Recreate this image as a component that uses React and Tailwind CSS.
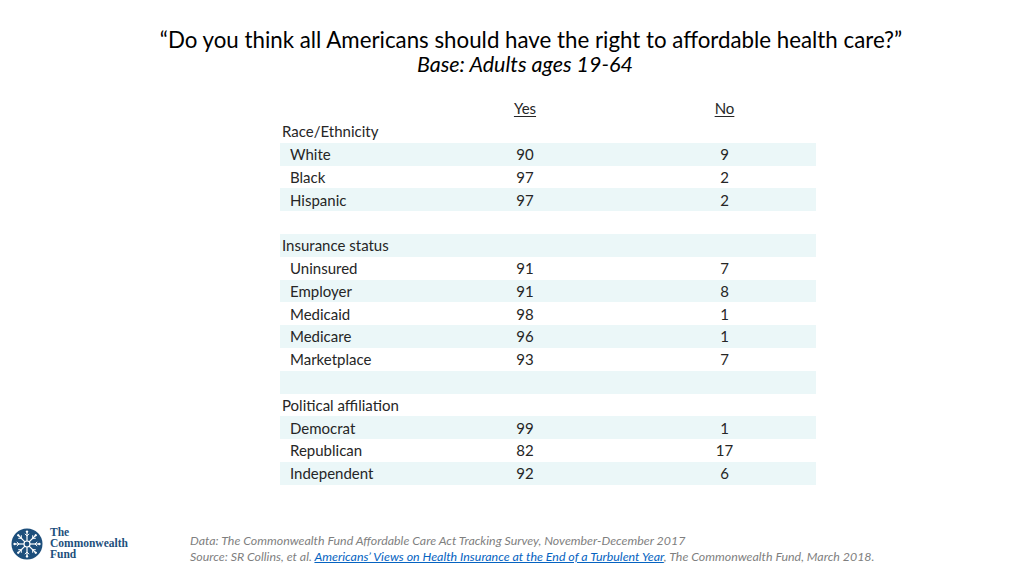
import React from 'react';

const sections = [
  {
    title: 'Race/Ethnicity',
    rows: [
      ['White', '90', '9'],
      ['Black', '97', '2'],
      ['Hispanic', '97', '2'],
    ],
  },
  {
    title: 'Insurance status',
    rows: [
      ['Uninsured', '91', '7'],
      ['Employer', '91', '8'],
      ['Medicaid', '98', '1'],
      ['Medicare', '96', '1'],
      ['Marketplace', '93', '7'],
    ],
  },
  {
    title: 'Political affiliation',
    rows: [
      ['Democrat', '99', '1'],
      ['Republican', '82', '17'],
      ['Independent', '92', '6'],
    ],
  },
];

// flatten into table rows, with a blank spacer between sections
function buildRows() {
  const out = [];
  sections.forEach((s, i) => {
    out.push({ kind: 'section', label: s.title });
    s.rows.forEach((r) => out.push({ kind: 'item', label: r[0], yes: r[1], no: r[2] }));
    if (i < sections.length - 1) out.push({ kind: 'blank' });
  });
  return out;
}

function Logo() {
  const spokes = [0, 45, 90, 135, 180, 225, 270, 315];
  return (
    <svg width="32" height="32" viewBox="0 0 32 32">
      <circle cx="16" cy="16" r="15.5" fill="#1d4f7c" />
      {spokes.map((a) => (
        <g key={a} transform={`rotate(${a} 16 16)`}>
          <line x1="16" y1="13" x2="16" y2="4" stroke="#fff" strokeWidth="1.2" />
          <line x1="16" y1="8" x2="13.8" y2="5.8" stroke="#fff" strokeWidth="0.9" />
          <line x1="16" y1="8" x2="18.2" y2="5.8" stroke="#fff" strokeWidth="0.9" />
          <circle cx="16" cy="3.6" r="1.2" fill="#fff" />
        </g>
      ))}
      <circle cx="16" cy="16" r="3" fill="none" stroke="#fff" strokeWidth="1.2" />
    </svg>
  );
}

export default function App() {
  const rows = buildRows();
  return (
    <div
      className="relative flex h-[576px] w-[1024px] flex-col overflow-hidden bg-white text-[#262626]"
      style={{ fontFamily: 'Lato, "Open Sans", sans-serif' }}
    >
      {/* Title */}
      <div className="pl-[38px] pt-[27px] text-center leading-[25px]">
        <p className="text-[22.3px] text-black">
          “Do you think all Americans should have the right to affordable health care?”
        </p>
        <p className="pr-[12px] text-[21.5px] italic text-black">Base: Adults ages 19-64</p>
      </div>

      {/* Table */}
      <div className="ml-[280px] mt-[20px] w-[536px] text-[15px]">
        <div className="grid h-[23px] grid-cols-[145px_200px_191px] items-center">
          <span />
          <span className="text-center underline underline-offset-2">Yes</span>
          <span className="pl-[8px] text-center underline underline-offset-2">No</span>
        </div>
        {rows.map((r, i) => (
          <div
            key={i}
            className={`grid h-[22.8px] grid-cols-[145px_200px_191px] items-center ${
              i % 2 === 1 ? 'bg-[#ebf7f8]' : ''
            }`}
          >
            {r.kind === 'section' && <span className="whitespace-nowrap pl-[2px]">{r.label}</span>}
            {r.kind === 'item' && (
              <>
                <span className="pl-[10px]">{r.label}</span>
                <span className="text-center">{r.yes}</span>
                <span className="pl-[8px] text-center">{r.no}</span>
              </>
            )}
          </div>
        ))}
      </div>

      {/* Footer */}
      <div className="mt-auto flex items-end pb-[11px]">
        <div className="mb-[5px] flex items-center pl-[11px]">
          <Logo />
          <div
            className="ml-[7px] text-[11.5px] font-bold leading-[11px] text-[#1d4f7c]"
            style={{ fontFamily: '"Liberation Serif", serif' }}
          >
            <div>The</div>
            <div>Commonwealth</div>
            <div>Fund</div>
          </div>
        </div>
        <div className="ml-[62px] text-[12.4px] italic leading-[16px] text-[#7f7f7f]">
          <p>Data: The Commonwealth Fund Affordable Care Act Tracking Survey, November-December 2017</p>
          <p>
            Source: SR Collins, et al.{' '}
            <span className="text-[#0563c1] underline">
              Americans’ Views on Health Insurance at the End of a Turbulent Year
            </span>
            , The Commonwealth Fund, March 2018.
          </p>
        </div>
      </div>
    </div>
  );
}
